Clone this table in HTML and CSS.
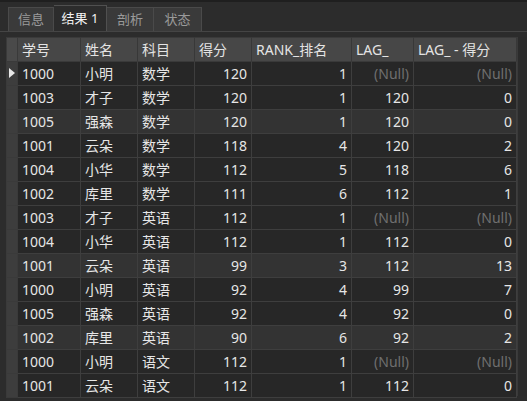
FILE: index.html
```html
<!DOCTYPE html>
<html>
<head>
<meta charset="utf-8">
<link rel="stylesheet" href="styles.css">
</head>
<body>
<div class="app">
  <div class="tabs">
    <div class="tab t1">信息</div>
    <div class="tab t2 active">结果 1</div>
    <div class="tab t3">剖析</div>
    <div class="tab t4">状态</div>
  </div>
  <div class="gridwrap">
    <table class="grid">
      <colgroup>
        <col class="c-ind"><col class="c-id"><col class="c-n"><col class="c-n"><col class="c-n"><col class="c-rank"><col class="c-lag"><col class="c-diff">
      </colgroup>
      <thead>
        <tr><th class="ind"></th><th>学号</th><th>姓名</th><th>科目</th><th>得分</th><th>RANK_排名</th><th>LAG_</th><th>LAG_ - 得分</th></tr>
      </thead>
      <tbody>
        <tr><td class="ind"><span class="arrow"></span></td><td>1000</td><td>小明</td><td>数学</td><td class="r">120</td><td class="r">1</td><td class="r null">(Null)</td><td class="r null">(Null)</td></tr>
        <tr><td class="ind"></td><td>1003</td><td>才子</td><td>数学</td><td class="r">120</td><td class="r">1</td><td class="r">120</td><td class="r">0</td></tr>
        <tr class="hl"><td class="ind"></td><td>1005</td><td>强森</td><td>数学</td><td class="r">120</td><td class="r">1</td><td class="r">120</td><td class="r">0</td></tr>
        <tr><td class="ind"></td><td>1001</td><td>云朵</td><td>数学</td><td class="r">118</td><td class="r">4</td><td class="r">120</td><td class="r">2</td></tr>
        <tr><td class="ind"></td><td>1004</td><td>小华</td><td>数学</td><td class="r">112</td><td class="r">5</td><td class="r">118</td><td class="r">6</td></tr>
        <tr><td class="ind"></td><td>1002</td><td>库里</td><td>数学</td><td class="r">111</td><td class="r">6</td><td class="r">112</td><td class="r">1</td></tr>
        <tr><td class="ind"></td><td>1003</td><td>才子</td><td>英语</td><td class="r">112</td><td class="r">1</td><td class="r null">(Null)</td><td class="r null">(Null)</td></tr>
        <tr><td class="ind"></td><td>1004</td><td>小华</td><td>英语</td><td class="r">112</td><td class="r">1</td><td class="r">112</td><td class="r">0</td></tr>
        <tr class="hl"><td class="ind"></td><td>1001</td><td>云朵</td><td>英语</td><td class="r">99</td><td class="r">3</td><td class="r">112</td><td class="r">13</td></tr>
        <tr><td class="ind"></td><td>1000</td><td>小明</td><td>英语</td><td class="r">92</td><td class="r">4</td><td class="r">99</td><td class="r">7</td></tr>
        <tr><td class="ind"></td><td>1005</td><td>强森</td><td>英语</td><td class="r">92</td><td class="r">4</td><td class="r">92</td><td class="r">0</td></tr>
        <tr class="hl"><td class="ind"></td><td>1002</td><td>库里</td><td>英语</td><td class="r">90</td><td class="r">6</td><td class="r">92</td><td class="r">2</td></tr>
        <tr><td class="ind"></td><td>1000</td><td>小明</td><td>语文</td><td class="r">112</td><td class="r">1</td><td class="r null">(Null)</td><td class="r null">(Null)</td></tr>
        <tr><td class="ind"></td><td>1001</td><td>云朵</td><td>语文</td><td class="r">112</td><td class="r">1</td><td class="r">112</td><td class="r">0</td></tr>
      </tbody>
    </table>
    <div class="vscroll"></div>
  </div>
</div>
</body>
</html>
```

FILE: styles.css
```css
html, body {
  margin: 0;
  padding: 0;
  background: #2c2c2c;
  width: 527px;
  height: 401px;
  overflow: hidden;
}
.app {
  font-family: "Noto Sans", "Noto Sans CJK SC", sans-serif;
  font-size: 14px;
  color: #e6e6e6;
  border-top: 2px solid #1f1f1f;
  height: 399px;
  display: flex;
  flex-direction: column;
}
.tabs {
  display: flex;
  align-items: flex-end;
  padding-left: 8px;
  height: 29px;
  border-bottom: 1px solid #454545;
  background: #2c2c2c;
}
.tab {
  box-sizing: border-box;
  height: 24px;
  line-height: 22px;
  font-size: 13px;
  text-align: center;
  color: #9a9a9a;
  background: #3a3a3a;
  border: 1px solid #4a4a4a;
  border-bottom: none;
}
.t1 { width: 46px; }
.t2 { width: 53px; }
.t3 { width: 47px; border-left: none; }
.t4 { width: 48px; border-left: none; }
.tab.active {
  height: 26px;
  line-height: 24px;
  color: #f2f2f2;
  background: #2c2c2c;
  border-color: #505050;
  border-left: none;
}
.gridwrap {
  margin-top: 5px;
  margin-left: 6px;
  display: flex;
  height: 359px;
  background: #262626;
}
.grid {
  border-collapse: collapse;
  table-layout: fixed;
  width: 511px;
  align-self: flex-start;
}
.c-ind { width: 11px; }
.c-id { width: 63px; }
.c-n { width: 57px; }
.c-rank { width: 100px; }
.c-lag { width: 62px; }
.c-diff { width: 103px; }
.grid th, .grid td {
  box-sizing: border-box;
  height: 24px;
  padding: 0 4px;
  border: 1px solid #3e3e3e;
  white-space: nowrap;
  overflow: hidden;
  text-align: left;
  font-weight: normal;
  line-height: 22px;
}
.grid th {
  height: 24px;
  background: #474747;
  color: #e4e4e4;
  border-color: #3a3a3a #383838 #3a3a3a #383838;
}
.grid tbody tr { background: #272727; }
.grid tbody tr.hl { background: #333333; }
.grid td.ind, .grid th.ind {
  padding: 0;
  background: #3d3d3d;
  border-color: #3a3a3a;
  position: relative;
}
.grid th.ind { background: #4a4a4a; }
.grid td.r { text-align: right; }
.grid td.null { color: #6f6f6f; }
.arrow {
  position: absolute;
  left: 2px;
  top: 6px;
  width: 0;
  height: 0;
  border-top: 5px solid transparent;
  border-bottom: 5px solid transparent;
  border-left: 6px solid #e8e8e8;
}
.vscroll {
  flex: 1;
  background: #2b2b2b;
  border-left: 1px solid #3a3a3a;
}
```
